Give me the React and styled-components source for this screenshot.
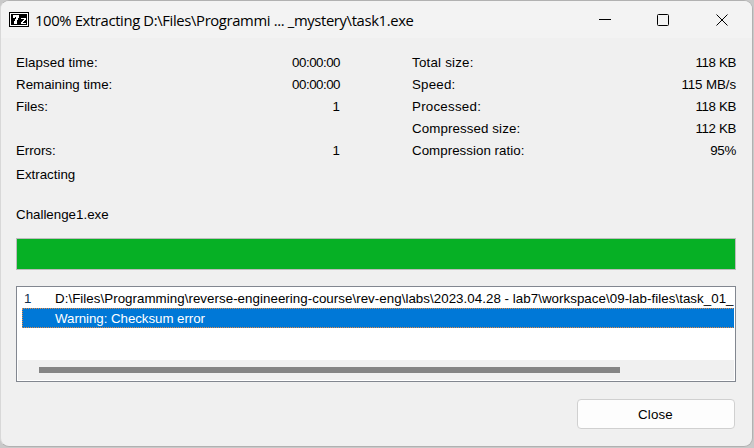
import React from "react";
import styled, { createGlobalStyle } from "styled-components";

const Global = createGlobalStyle`
  *{box-sizing:border-box}
  body{margin:0;background:#c9c9c9;overflow:hidden}
`;
const Dialog = styled.main`
  width:753px;height:447px;display:flex;flex-direction:column;
  background:#f0f0f0;border:1px solid #b1b1b1;border-left-color:#d8d8d8;
  border-radius:9px;overflow:hidden;color:#000;
  font:13.33px/22px "Liberation Sans",Arial,sans-serif;
`;
const TitleBar = styled.header`
  height:37px;flex:none;display:flex;align-items:center;background:#f3f3f3;padding-left:8px;
`;
const Title = styled.h1`
  margin:0 0 0 6px;flex:1;white-space:nowrap;
  font:400 14.8px/20px "Open Sans","Noto Sans",sans-serif;letter-spacing:${p => p.$track}px;
`;
const Controls = styled.div`display:flex;margin-right:1px;`;
const Control = styled.button`
  width:58.5px;height:36px;border:0;padding:0;background:none;display:grid;place-items:center;
`;
const Content = styled.section`flex:1;padding:14px 16px 0 15px;display:flex;flex-direction:column;`;
const Stats = styled.div`display:grid;grid-template-columns:324px 324px;column-gap:72px;height:110px;`;
const Column = styled.dl`margin:0;display:grid;grid-template-rows:repeat(5,22px);`;
const Stat = styled.div`display:flex;justify-content:space-between;grid-row:${p => p.$row};`;
const Label = styled.dt`margin:0;letter-spacing:${p => p.$track || 0}px;`;
const Value = styled.dd`
  margin:0;letter-spacing:${p => p.$track || 0}px;
`;
const Status = styled.div`margin-top:2px;`;
const FileName = styled.div`margin-top:18px;`;
const Progress = styled.div`
  margin-top:12px;height:32px;flex:none;border:1px solid #bcbcbc;background:#06b025;
`;
const List = styled.div`
  margin-top:16px;height:96px;flex:none;border:1px solid #828790;background:#fff;
  padding:1px;display:flex;flex-direction:column;overflow:hidden;
`;
const Row = styled.div`
  height:20px;flex:none;margin-left:4px;line-height:20px;display:flex;white-space:pre;
  overflow:hidden;padding:1px 0 0 2px;
  ${p => p.$selected && `
    background:
      repeating-linear-gradient(90deg,#e48a45 0 1px,#0078d7 1px 2px) top/100% 1px no-repeat,
      repeating-linear-gradient(90deg,#e48a45 0 1px,#0078d7 1px 2px) bottom/100% 1px no-repeat,
      repeating-linear-gradient(0deg,#e48a45 0 1px,#0078d7 1px 2px) left/1px 100% no-repeat,
      #0078d7;
    color:#fff;`}
`;
const RowNumber = styled.span`width:31px;flex:none;color:${p => p.$color || "#000"};`;
const RowText = styled.span`letter-spacing:${p => p.$track || 0}px;`;
const ScrollTrack = styled.div`
  margin-top:auto;height:20px;background:#f0f0f0;padding:7px 0 0 21px;
`;
const Thumb = styled.div`width:581px;height:6px;background:#858585;`;
const Footer = styled.footer`display:flex;justify-content:flex-end;margin-top:17px;padding-right:1px;`;
const CloseButton = styled.button`
  width:158px;height:30px;border:1px solid #d0d0d0;border-radius:4px;background:#fdfdfd;
  font:inherit;color:#000;padding:1px 1px 0 0;letter-spacing:.15px;
`;

const left = [
  { label: "Elapsed time:", value: "00:00:00", row: 1, labelTrack: 0.08, valueTrack: -0.5 },
  { label: "Remaining time:", value: "00:00:00", row: 2, labelTrack: 0, valueTrack: -0.5 },
  { label: "Files:", value: "1", row: 3 },
  { label: "Errors:", value: "1", row: 5, labelTrack: -0.05 },
];
const right = [
  { label: "Total size:", value: "118 KB", row: 1, labelTrack: 0.22, valueTrack: -0.38 },
  { label: "Speed:", value: "115 MB/s", row: 2, labelTrack: 0.2, valueTrack: -0.1 },
  { label: "Processed:", value: "118 KB", row: 3, labelTrack: 0.24, valueTrack: -0.38 },
  { label: "Compressed size:", value: "112 KB", row: 4, labelTrack: 0.1, valueTrack: -0.38 },
  { label: "Compression ratio:", value: "95%", row: 5, labelTrack: 0.03, valueTrack: -0.3 },
];

const StatColumn = ({ items }) => (
  <Column>
    {items.map(item => (
      <Stat key={item.label} $row={item.row}>
        <Label $track={item.labelTrack}>{item.label}</Label>
        <Value $track={item.valueTrack}>{item.value}</Value>
      </Stat>
    ))}
  </Column>
);

const SevenZipIcon = () => (
  <svg width="20" height="15" viewBox="0 0 20 15" shapeRendering="crispEdges">
    <path fill="#000" d="M0 0h20v15H0z" />
    <path fill="none" stroke="#fff" d="M1.5 1.5h17v12h-17z" />
    <path fill="#fff" d="M4 3h6v3H9v2H8v4H5V9h1V7h1V5H6v1H4zM12 6h5v2h-1v1h-1v1h-1v1h3v1h-5v-2h1V9h1V8h1V7h-3z" />
  </svg>
);

export default function App() {
  return (
    <>
      <Global />
      <Dialog>
        <TitleBar>
          <SevenZipIcon />
          <Title $track={-0.355}>100% Extracting D:\Files\Programmi ... _mystery\task1.exe</Title>
          <Controls>
            <Control aria-label="Minimize"><svg width="12" height="12" shapeRendering="crispEdges"><path d="M0 5.5h12" stroke="#000" /></svg></Control>
            <Control aria-label="Maximize"><svg width="12" height="12"><rect x=".5" y=".5" width="11" height="11" rx="1" fill="none" stroke="#000" /></svg></Control>
            <Control aria-label="Close window"><svg width="12" height="12"><path d="M.5.5l11 11M11.5.5l-11 11" stroke="#000" /></svg></Control>
          </Controls>
        </TitleBar>
        <Content>
          <Stats><StatColumn items={left} /><StatColumn items={right} /></Stats>
          <Status>Extracting</Status>
          <FileName>Challenge1.exe</FileName>
          <Progress role="progressbar" aria-valuenow={100} />
          <List>
            <Row><RowNumber $color="#10304f">1</RowNumber><RowText $track={0.04}>D:\Files\Programming\reverse-engineering-course\rev-eng\labs\2023.04.28 - lab7\workspace\09-lab-files\task_01_</RowText></Row>
            <Row $selected><RowNumber /><RowText $track={-0.06}>Warning: Checksum error</RowText></Row>
            <ScrollTrack><Thumb /></ScrollTrack>
          </List>
          <Footer><CloseButton>Close</CloseButton></Footer>
        </Content>
      </Dialog>
    </>
  );
}
